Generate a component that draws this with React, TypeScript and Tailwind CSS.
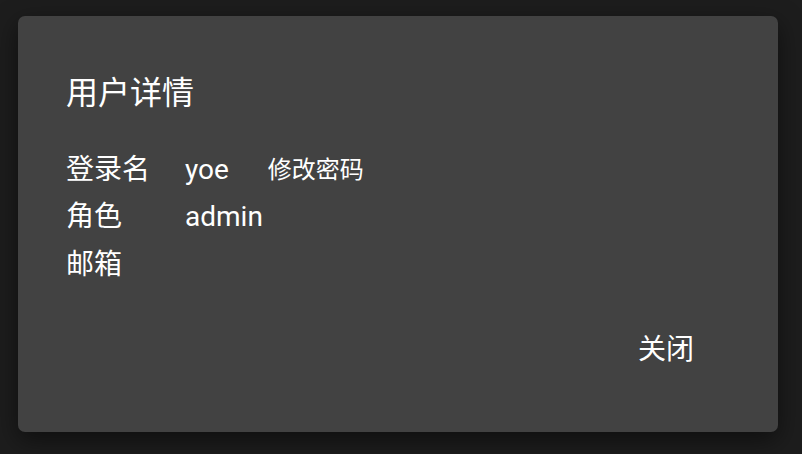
const rows = [
  { label: "登录名", value: "yoe", action: "修改密码" },
  { label: "角色", value: "admin" },
  { label: "邮箱", value: "" },
];

const App = () => {
  return (
    <div className="w-[802px] h-[454px] bg-[#1d1d1d] pt-[16px] pl-[18px] overflow-hidden font-['Roboto','Noto_Sans_CJK_SC',sans-serif] text-white">
      <div className="w-[760px] h-[416px] bg-[#424242] rounded-[7px] shadow-[0_8px_24px_rgba(0,0,0,0.5)] flex flex-col pl-[48px]">
        <h2 className="pt-[53px] text-[32px] leading-[48px] font-normal">用户详情</h2>

        <div className="mt-[29px] flex flex-col">
          {rows.map((row) => (
            <div key={row.label} className="flex items-center h-[47.5px] text-[28px]">
              <span className="w-[119px]">{row.label}</span>
              <span>{row.value}</span>
              {row.action && (
                <button className="ml-[39px] text-[24px] text-white">{row.action}</button>
              )}
            </div>
          ))}
        </div>

        <div className="flex justify-end pr-[84px] mt-[37px]">
          <button className="text-[28px] leading-[48px] text-white">关闭</button>
        </div>
      </div>
    </div>
  );
};

export default App;
